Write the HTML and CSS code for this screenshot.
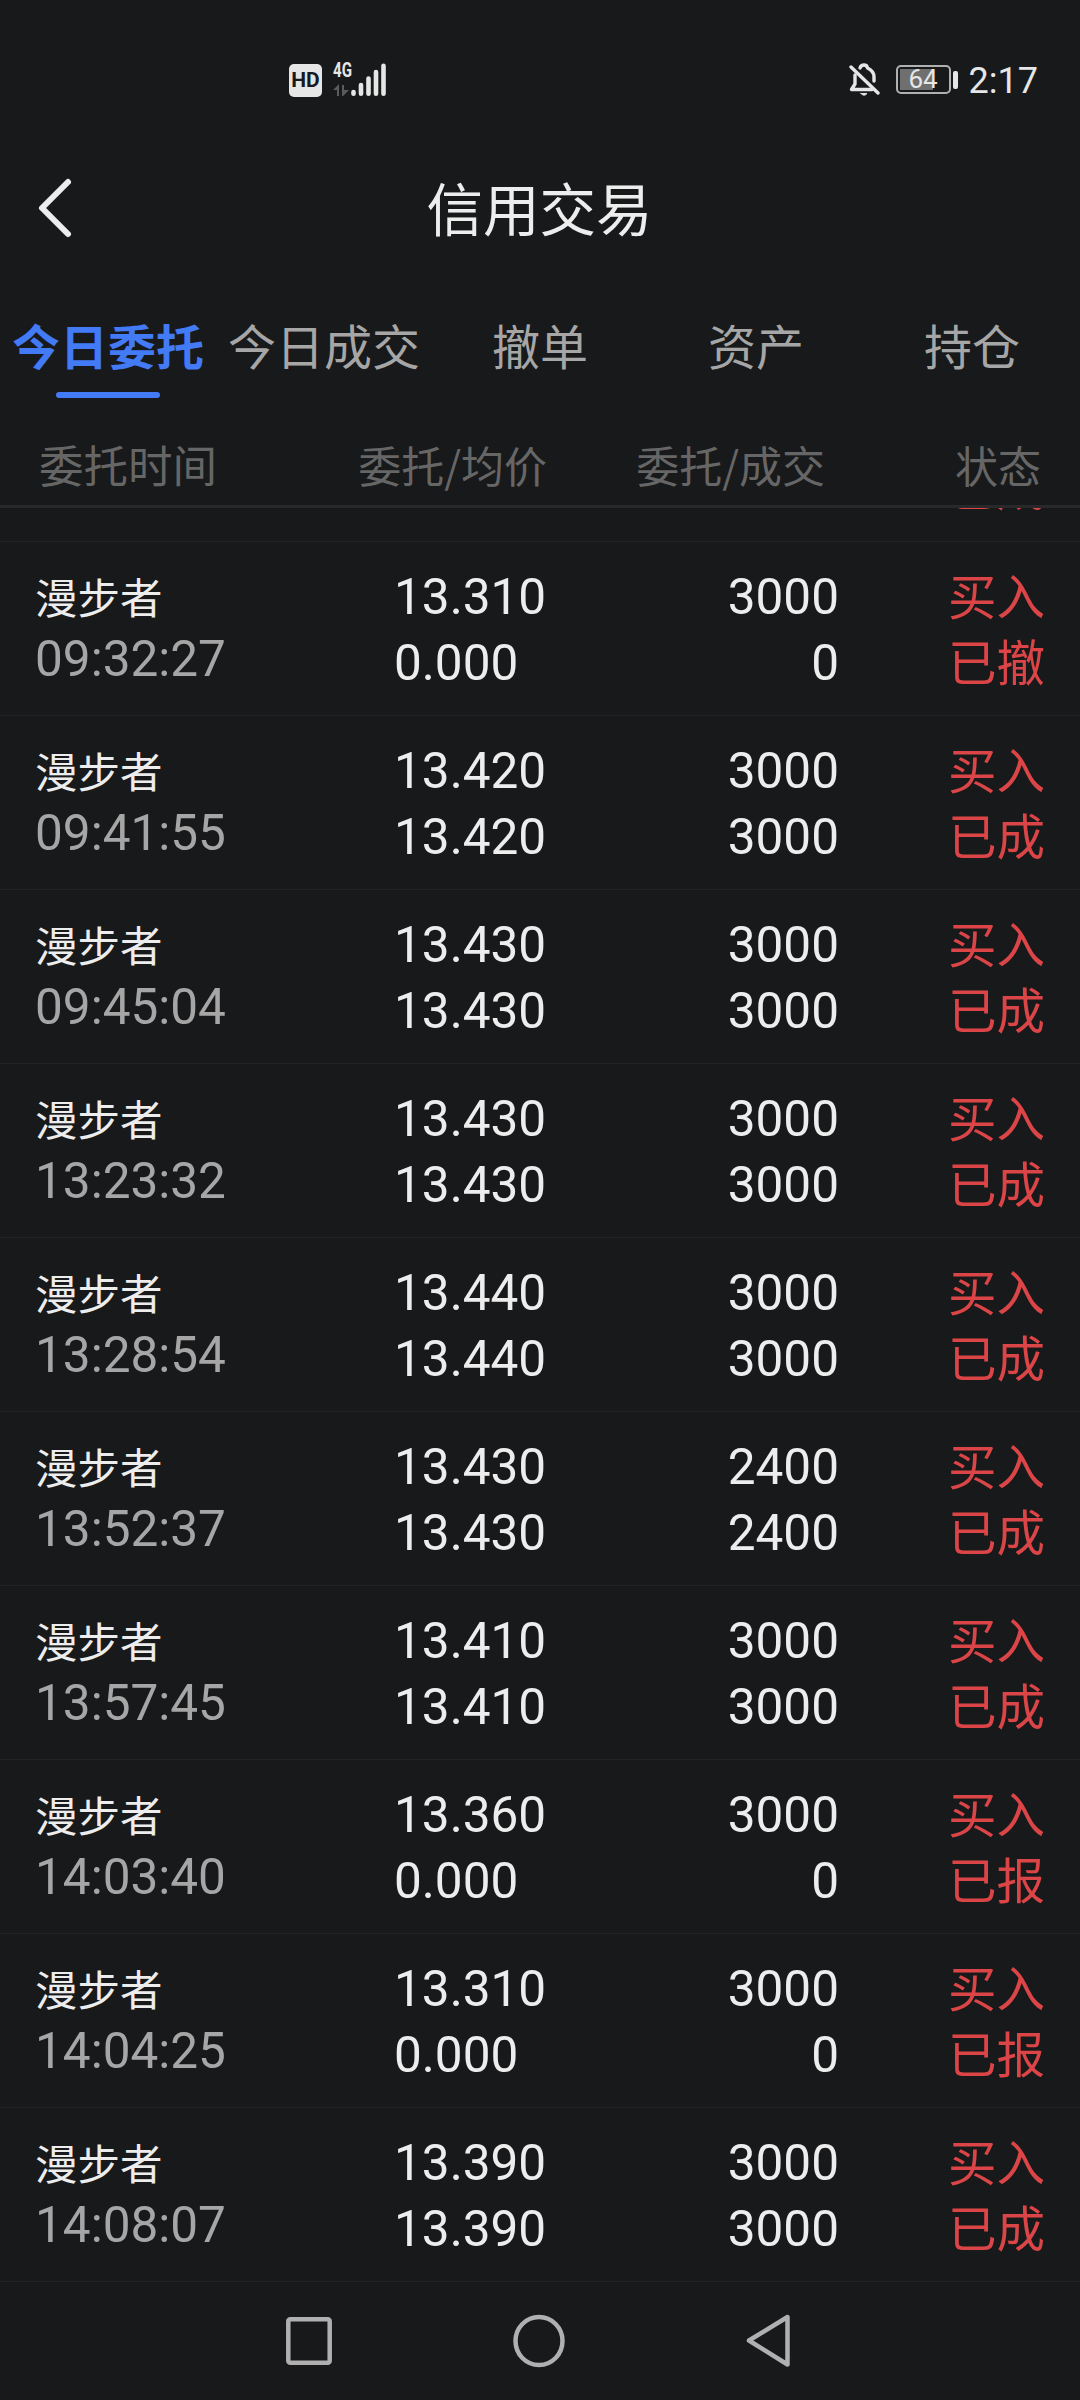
FILE: index.html
```html
<!doctype html>
<html lang="zh-CN">
<head>
    <meta charset="UTF-8">
    <meta name="viewport" content="width=device-width, initial-scale=1.0">
    <title>信用交易</title>
    <link rel="stylesheet" href="styles.css">
</head>
<body>
    <div class="status-bar">
        <div class="status-left">
            <span class="hd">HD</span>
            <div class="network">
                <span class="net-type">4G</span>
                <svg width="54" height="34" viewBox="0 0 54 34">
                    <path d="M0 27 L6 21 V33 H4 V27 Z M9 22 H11 V27 H16 L10 33 H9 Z" fill="#5a5b5c"/>
                    <g stroke="#e6e6e6" stroke-width="4.6" stroke-linecap="round">
                        <path d="M20.5 29 V30.7 M28 22 V30.7 M35.5 15.5 V30.7 M43 9 V30.7 M50.5 2.8 V30.7"/>
                    </g>
                </svg>
            </div>
        </div>
        <div class="status-right">
            <svg class="bell" width="32" height="34" viewBox="0 0 32 34" fill="none" stroke="#e6e6e6" stroke-width="3.4" stroke-linecap="round" stroke-linejoin="round">
                <path d="M6 12 V21 L2.5 26.5 H23"/>
                <path d="M11 5 Q12 2 15 2 Q18 2 18.5 5 Q25 8 25 14 V18"/>
                <path d="M2 4 L29 30"/>
                <path d="M12 30.5 H18 Q15 34 12 30.5 Z" fill="#e6e6e6" stroke-width="1"/>
            </svg>
            <div class="battery"><span class="battery-level"></span><b>64</b></div>
            <span class="battery-tip"></span>
            <span class="clock">2:17</span>
        </div>
    </div>

    <div class="title-bar">
        <svg class="back" width="36" height="62" viewBox="0 0 36 62" fill="none" stroke="#ededed" stroke-width="6" stroke-linecap="round" stroke-linejoin="round">
            <path d="M31 5 L5 31 L31 57"/>
        </svg>
        <h1>信用交易</h1>
    </div>

    <div class="tabs">
        <div class="tab active">今日委托</div>
        <div class="tab">今日成交</div>
        <div class="tab">撤单</div>
        <div class="tab">资产</div>
        <div class="tab">持仓</div>
    </div>

    <div class="list-head">
        <span class="head-time">委托时间</span>
        <span>委托/均价</span>
        <span>委托/成交</span>
        <span>状态</span>
    </div>

    <div class="list" id="list"></div>

    <div class="nav-bar">
        <svg width="48" height="52" viewBox="0 0 48 52"><rect x="4.3" y="5.3" width="41.4" height="43.4" rx="2"/></svg>
        <svg width="52" height="54" viewBox="0 0 52 54"><ellipse cx="26" cy="27" rx="23.5" ry="24"/></svg>
        <svg width="46" height="54" viewBox="0 0 46 54"><path d="M41.5 3 V50.5 L3 26.5 Z"/></svg>
    </div>

    <script>
        // time, order price, average price, order amount, filled amount, state
        const orders = [
            ['09:32:20', '13.310', '0.000', '3000', '0', '已成'],
            ['09:32:27', '13.310', '0.000', '3000', '0', '已撤'],
            ['09:41:55', '13.420', '13.420', '3000', '3000', '已成'],
            ['09:45:04', '13.430', '13.430', '3000', '3000', '已成'],
            ['13:23:32', '13.430', '13.430', '3000', '3000', '已成'],
            ['13:28:54', '13.440', '13.440', '3000', '3000', '已成'],
            ['13:52:37', '13.430', '13.430', '2400', '2400', '已成'],
            ['13:57:45', '13.410', '13.410', '3000', '3000', '已成'],
            ['14:03:40', '13.360', '0.000', '3000', '0', '已报'],
            ['14:04:25', '13.310', '0.000', '3000', '0', '已报'],
            ['14:08:07', '13.390', '13.390', '3000', '3000', '已成']
        ];

        // the first order is scrolled under the header, only its state still shows
        document.getElementById('list').innerHTML = orders.map((o, i) => i === 0 ? `
            <div class="row">
                <div></div><div></div><div></div>
                <div class="state"><div>&nbsp;</div><div>${o[5]}</div></div>
            </div>` : `
            <div class="row">
                <div class="stock"><div class="name">漫步者</div><div class="time">${o[0]}</div></div>
                <div class="price"><div>${o[1]}</div><div>${o[2]}</div></div>
                <div class="amount"><div>${o[3]}</div><div>${o[4]}</div></div>
                <div class="state"><div>买入</div><div>${o[5]}</div></div>
            </div>`).join('');
    </script>
</body>
</html>
```
FILE: styles.css
```css
* {
    box-sizing: border-box;
}

body {
    margin: 0;
    width: 1080px;
    height: 2400px;
    display: flex;
    flex-direction: column;
    overflow: hidden;
    background: #18191b;
    color: #ededed;
    font-family: "Noto Sans CJK SC", sans-serif;
}

/* Status bar */
.status-bar {
    height: 150px;
    padding: 0 42px 0 289px;
    display: flex;
    justify-content: space-between;
    font-family: Roboto, sans-serif;
    color: #e6e6e6;
}

.status-left,
.status-right {
    display: flex;
    align-items: flex-start;
}

.hd {
    width: 33px;
    height: 33px;
    margin-top: 64px;
    border-radius: 5px;
    background: #e6e6e6;
    color: #18191b;
    font-size: 21px;
    font-weight: bold;
    line-height: 33px;
    text-align: center;
}

.network {
    position: relative;
    margin: 63px 0 0 11px;
}

.net-type {
    position: absolute;
    top: -3px;
    left: 0;
    font-size: 21px;
    font-weight: bold;
    line-height: 21px;
    transform: scaleX(0.72);
    transform-origin: 0 0;
}

.bell {
    margin: 63px 15px 0 0;
}

.battery {
    position: relative;
    width: 55px;
    height: 29px;
    margin-top: 65px;
    border: 2px solid #b0b0b0;
    border-radius: 5px;
    text-align: center;
}

.battery-level {
    position: absolute;
    top: 2px;
    left: 2px;
    width: 33px;
    height: 21px;
    background: #6f6f70;
}

.battery b {
    position: relative;
    display: block;
    font-size: 26px;
    font-weight: 400;
    line-height: 25px;
}

.battery-tip {
    width: 5px;
    height: 18px;
    margin: 71px 11px 0 2px;
    border-radius: 2px;
    background: #e6e6e6;
}

.clock {
    margin-top: 61px;
    font-size: 36px;
    line-height: 40px;
}

/* Title */
.title-bar {
    position: relative;
    height: 120px;
}

.title-bar h1 {
    margin: 0 1px 0 0;
    font-size: 56.5px;
    font-weight: 400;
    line-height: 112px;
    text-align: center;
}

.back {
    position: absolute;
    top: 27px;
    left: 37px;
}

/* Tabs */
.tabs {
    height: 144px;
    display: grid;
    grid-template-columns: repeat(5, 1fr);
}

.tab {
    position: relative;
    padding-top: 34px;
    color: #a6a6a6;
    font-size: 48px;
    line-height: 80px;
    text-align: center;
    white-space: nowrap;
}

.tab.active {
    color: #437af5;
    font-weight: bold;
}

.tab.active::after {
    content: "";
    position: absolute;
    top: 122px;
    left: 56px;
    width: 104px;
    height: 6px;
    border-radius: 3px;
    background: #437af5;
}

/* List */
.list-head {
    height: 94px;
    padding: 15px 39px 0;
    display: grid;
    grid-template-columns: 250px 258px 278px 1fr;
    border-bottom: 3px solid #28292b;
    color: #666;
    font-size: 43px;
    line-height: 70px;
}

.list-head span {
    text-align: right;
    white-space: nowrap;
}

.list-head .head-time {
    font-size: 44.5px;
    text-align: left;
}

.list {
    height: 1774px;
    overflow: hidden;
}

.row {
    height: 174px;
    padding: 22px 35px 0;
    display: grid;
    grid-template-columns: 359px 201px 244px 1fr;
    border-bottom: 1px solid #222325;
    line-height: 66px;
}

/* list is scrolled, first row is mostly under the header */
.row:first-child {
    margin-top: -140px;
}

.row:first-child .state {
    margin-top: -4px;
}

.name {
    margin-top: -1px;
    font-size: 42.5px;
}

.time {
    margin-top: -3px;
    color: #a6a6a6;
}

.time,
.price,
.amount {
    font-family: Roboto, sans-serif;
    font-size: 49.5px;
}

.amount,
.state {
    text-align: right;
}

.state {
    margin-top: -3px;
    color: #dc4547;
    font-size: 48.5px;
}

/* Android buttons */
.nav-bar {
    flex: 1;
    padding: 32px 288px 0 284px;
    display: flex;
    align-items: flex-start;
    justify-content: space-between;
}

.nav-bar svg {
    fill: none;
    stroke: #b0b0b0;
    stroke-width: 4.5;
    stroke-linejoin: round;
}
```
